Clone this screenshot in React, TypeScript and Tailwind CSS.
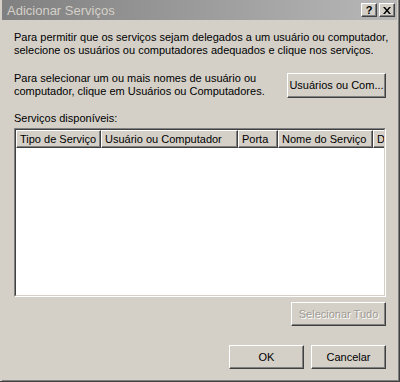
import React from 'react'

const raised =
  'border border-t-white border-l-white border-r-[#404040] border-b-[#404040] shadow-[inset_-1px_-1px_0_#808080]'

const Button = ({ label, className = '', disabled = false }: { label: string; className?: string; disabled?: boolean }) => (
  <div
    className={`${raised} bg-[#d4d0c8] flex items-center justify-center ${
      disabled ? 'text-[#a09c94] [text-shadow:1px_1px_0_#fff]' : 'text-black'
    } ${className}`}
  >
    {label}
  </div>
)

const HeaderCell = ({ label, width }: { label: string; width: string }) => (
  <div className={`${raised} ${width} shrink-0 h-full bg-[#d4d0c8] flex items-center pl-[3px] whitespace-nowrap overflow-hidden`}>
    {label}
  </div>
)

export default function App() {
  return (
    <div className="w-[400px] h-[382px] bg-[#d4d0c8] text-[11px] leading-[13px] text-black font-['Liberation_Sans',sans-serif] flex flex-col pl-[2px] border-r border-b border-r-[#404040] border-b-[#404040]">
      <div className="flex flex-col flex-1 border-r border-b border-r-[#808080] border-b-[#808080] pr-[1px] pb-[1px]">
        {/* title bar */}
        <div className="h-[20px] shrink-0 flex items-center bg-gradient-to-r from-[#808080] to-[#b8b8b8] pl-[5px] pr-[2px]">
          <span className="text-[13px] text-[#d4d0c8] grow">Adicionar Serviços</span>
          <div className={`${raised} w-[16px] h-[14px] bg-[#d4d0c8] flex items-center justify-center text-[11px] font-bold`}>?</div>
          <div className={`${raised} w-[16px] h-[14px] bg-[#d4d0c8] flex items-center justify-center ml-[2px]`}>
            <svg width="8" height="7" viewBox="0 0 8 7">
              <path d="M0 0h2l2 2.5L6 0h2L5 3.5 8 7H6L4 4.5 2 7H0l3-3.5z" fill="#000" />
            </svg>
          </div>
        </div>

        <div className="flex flex-col flex-1 pl-[12px] pr-[11px]">
          <p className="mt-[11px] whitespace-nowrap">
            Para permitir que os serviços sejam delegados a um usuário ou computador,
            <br />
            selecione os usuários ou computadores adequados e clique nos serviços.
          </p>

          <div className="flex items-center mt-[15px] h-[26px]">
            <p className="grow whitespace-nowrap">
              Para selecionar um ou mais nomes de usuário ou
              <br />
              computador, clique em Usuários ou Computadores.
            </p>
            <Button label="Usuários ou Com..." className="w-[99px] h-[25px]" />
          </div>

          <p className="mt-[14px]">Serviços disponíveis:</p>

          <div className="mt-[3px] w-[372px] h-[169px] border border-t-[#808080] border-l-[#808080] border-r-white border-b-white">
            <div className="h-full border border-t-[#404040] border-l-[#404040] border-r-[#d4d0c8] border-b-[#d4d0c8] bg-white overflow-hidden">
              <div className="flex h-[18px]">
                <HeaderCell label="Tipo de Serviço" width="w-[85px]" />
                <HeaderCell label="Usuário ou Computador" width="w-[137px]" />
                <HeaderCell label="Porta" width="w-[40px]" />
                <HeaderCell label="Nome do Serviço" width="w-[95px]" />
                <HeaderCell label="Descrição" width="w-[80px]" />
              </div>
            </div>
          </div>

          <div className="flex justify-end mt-[5px]">
            <Button label="Selecionar Tudo" disabled className="w-[95px] h-[24px]" />
          </div>

          <div className="flex justify-end gap-[7px] mt-[19px]">
            <Button label="OK" className="w-[75px] h-[24px]" />
            <Button label="Cancelar" className="w-[75px] h-[24px]" />
          </div>
        </div>
      </div>
    </div>
  )
}
